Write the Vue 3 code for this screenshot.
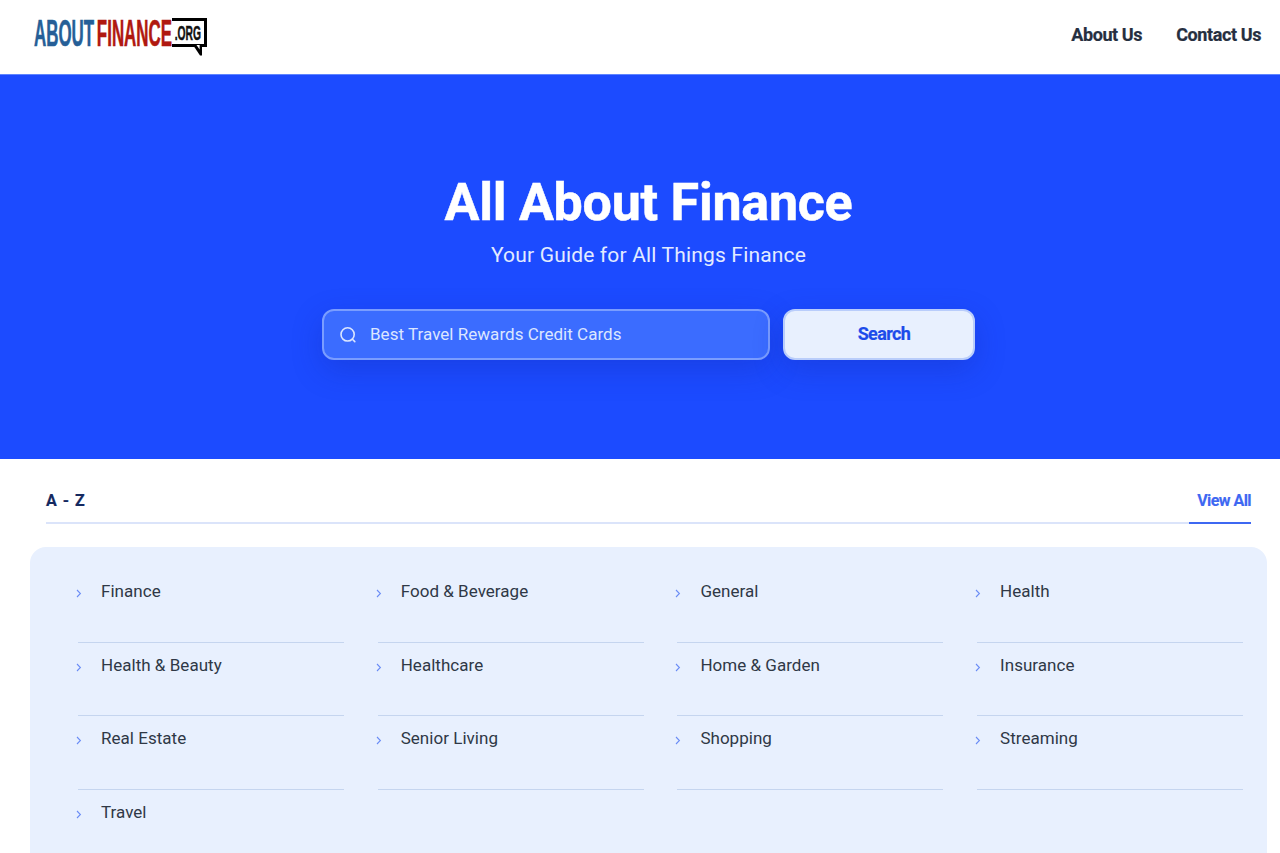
<script setup>
const categories = [
  'Finance', 'Food & Beverage', 'General', 'Health',
  'Health & Beauty', 'Healthcare', 'Home & Garden', 'Insurance',
  'Real Estate', 'Senior Living', 'Shopping', 'Streaming',
  'Travel'
]
</script>

<template>
  <div class="page">
    <header class="topbar">
      <a class="logo">
        <span class="logo-word">
          <span class="about">ABOUT</span><span class="finance">FINANCE</span>
        </span>
        <span class="org">
          <span class="org-text">.ORG</span>
          <svg class="org-tail" width="10" height="11" viewBox="0 0 10 11">
            <path d="M0 0 L7 10.5 L9 10.5 L9 0 Z" fill="#000" />
            <path d="M3.5 0 L6.6 4.5 L6.6 0 Z" fill="#fff" />
          </svg>
        </span>
      </a>
      <nav class="nav">
        <a>About Us</a>
        <a>Contact Us</a>
      </nav>
    </header>

    <section class="hero">
      <h1>All About Finance</h1>
      <p>Your Guide for All Things Finance</p>
      <div class="search-row">
        <div class="search-box">
          <svg width="20" height="20" viewBox="0 0 20 20" fill="none" stroke="#dbe6ff" stroke-width="1.6" stroke-linecap="round">
            <circle cx="9.6" cy="9.4" r="6.6" />
            <path d="M14.4 14.2 L16.8 16.6" />
          </svg>
          <span>Best Travel Rewards Credit Cards</span>
        </div>
        <button class="search-btn">Search</button>
      </div>
    </section>

    <section class="directory">
      <div class="dir-head">
        <span class="az">A - Z</span>
        <a class="view-all">View All</a>
      </div>
      <div class="panel">
        <div class="grid">
          <div v-for="c in categories" :key="c" class="cat">
            <svg class="chev" width="6" height="9" viewBox="0 0 6 9" fill="none" stroke="#6a8cf6" stroke-width="1.1">
              <path d="M1 1 L4.4 4.5 L1 8" />
            </svg>
            <span>{{ c }}</span>
          </div>
        </div>
      </div>
    </section>
  </div>
</template>

<style>
html, body {
  margin: 0;
  overflow: hidden;
  background: #fff;
}
</style>

<style scoped>
.page {
  width: 1280px;
  height: 853px;
  overflow: hidden;
  font-family: Roboto, "Liberation Sans", sans-serif;
  background: #fff;
}

.topbar {
  height: 75px;
  box-sizing: border-box;
  display: flex;
  align-items: flex-start;
  justify-content: space-between;
  padding: 0 19px 0 34px;
  border-bottom: 1px solid #5f85ff;
}

.logo {
  display: flex;
  align-items: flex-start;
  margin-top: 18px;
}

.logo-word {
  width: 138px;
  height: 29px;
  display: block;
  font-family: "Liberation Sans", sans-serif;
  font-weight: 700;
  font-size: 37px;
  line-height: 31px;
  white-space: nowrap;
  transform: scaleX(0.457);
  transform-origin: left center;
  -webkit-text-stroke: 0.6px currentColor;
}

.about {
  color: #265f97;
}

.finance {
  color: #b01810;
  margin-left: 6px;
}

.org {
  position: relative;
  width: 35px;
  height: 29px;
  box-sizing: border-box;
  border-top: 3px solid #000;
  border-right: 3px solid #000;
  border-bottom: 3px solid #000;
  display: flex;
  align-items: center;
  justify-content: center;
}

.org-text {
  display: block;
  font-family: "Liberation Sans", sans-serif;
  font-weight: 700;
  font-size: 21px;
  line-height: 20px;
  color: #111;
  transform: scaleX(0.49);
  white-space: nowrap;
  -webkit-text-stroke: 0.5px currentColor;
}

.org-tail {
  position: absolute;
  right: 1px;
  bottom: -12px;
}

.nav {
  display: flex;
  gap: 34px;
  margin-top: 24px;
}

.nav a {
  font-size: 18px;
  line-height: 22px;
  font-weight: 700;
  color: #262f3f;
  letter-spacing: -0.4px;
  -webkit-text-stroke: 0.2px currentColor;
}

.hero {
  height: 384px;
  box-sizing: border-box;
  background: #1c4bff;
  padding: 97px 0 0 17px;
  display: flex;
  flex-direction: column;
  align-items: center;
  color: #fff;
}

.hero h1 {
  margin: 0;
  font-size: 52px;
  line-height: 62px;
  font-weight: 700;
  letter-spacing: -0.25px;
  -webkit-text-stroke: 0.5px currentColor;
}

.hero p {
  margin: 6px 0 0;
  font-size: 21px;
  line-height: 30px;
  font-weight: 400;
  letter-spacing: 0.17px;
  color: #e3ebff;
}

.search-row {
  display: flex;
  gap: 13px;
  margin-top: 39px;
}

.search-box {
  width: 448px;
  height: 51px;
  box-sizing: border-box;
  display: flex;
  align-items: center;
  gap: 12px;
  padding-left: 14px;
  background: #3b6cff;
  border: 2px solid #7a9dff;
  border-radius: 12px;
  box-shadow: 0 10px 30px rgba(20, 40, 170, 0.3);
  font-size: 17px;
  letter-spacing: 0.03px;
  color: #dbe6ff;
}

.search-box span {
  margin-bottom: 2px;
}

.search-btn {
  width: 192px;
  height: 51px;
  box-sizing: border-box;
  background: #e8f0fe;
  border: 2px solid #b9cdfb;
  border-radius: 12px;
  box-shadow: 0 10px 30px rgba(20, 40, 170, 0.3);
  font-family: inherit;
  font-size: 18px;
  font-weight: 700;
  letter-spacing: -0.6px;
  -webkit-text-stroke: 0.2px currentColor;
  color: #1c4bea;
  padding: 0 0 2px 10px;
}

.directory {
  padding: 0 13px 0 30px;
}

.dir-head {
  height: 65px;
  box-sizing: border-box;
  margin: 0 16px;
  display: flex;
  align-items: flex-end;
  justify-content: space-between;
  border-bottom: 2px solid #dbe4fa;
}

.az {
  font-size: 16px;
  line-height: 20px;
  font-weight: 700;
  color: #14295f;
  letter-spacing: 1px;
  -webkit-text-stroke: 0.2px currentColor;
  margin-bottom: 11px;
}

.view-all {
  width: 62px;
  box-sizing: border-box;
  text-align: right;
  font-size: 16px;
  line-height: 20px;
  font-weight: 700;
  letter-spacing: -0.55px;
  -webkit-text-stroke: 0.15px currentColor;
  color: #3e68f2;
  padding-bottom: 11px;
  margin-bottom: -2px;
  border-bottom: 2px solid #3e68f2;
  white-space: nowrap;
}

.panel {
  margin-top: 23px;
  height: 400px;
  box-sizing: border-box;
  background: #e8f0fe;
  border-radius: 16px;
  padding: 22.4px 24px 0 46px;
}

.grid {
  display: grid;
  grid-template-columns: repeat(4, 266px);
  column-gap: 33.7px;
  grid-auto-rows: 73.4px;
  padding-left: 2px;
}

.cat {
  position: relative;
  box-sizing: border-box;
  border-bottom: 1px solid #c5d5ef;
  padding-top: 10px;
  font-size: 17px;
  line-height: 24px;
  letter-spacing: 0.03px;
  color: #2f3846;
}

.cat span {
  display: block;
  margin-left: 23px;
}

.chev {
  position: absolute;
  left: -2px;
  top: 20px;
}
</style>
